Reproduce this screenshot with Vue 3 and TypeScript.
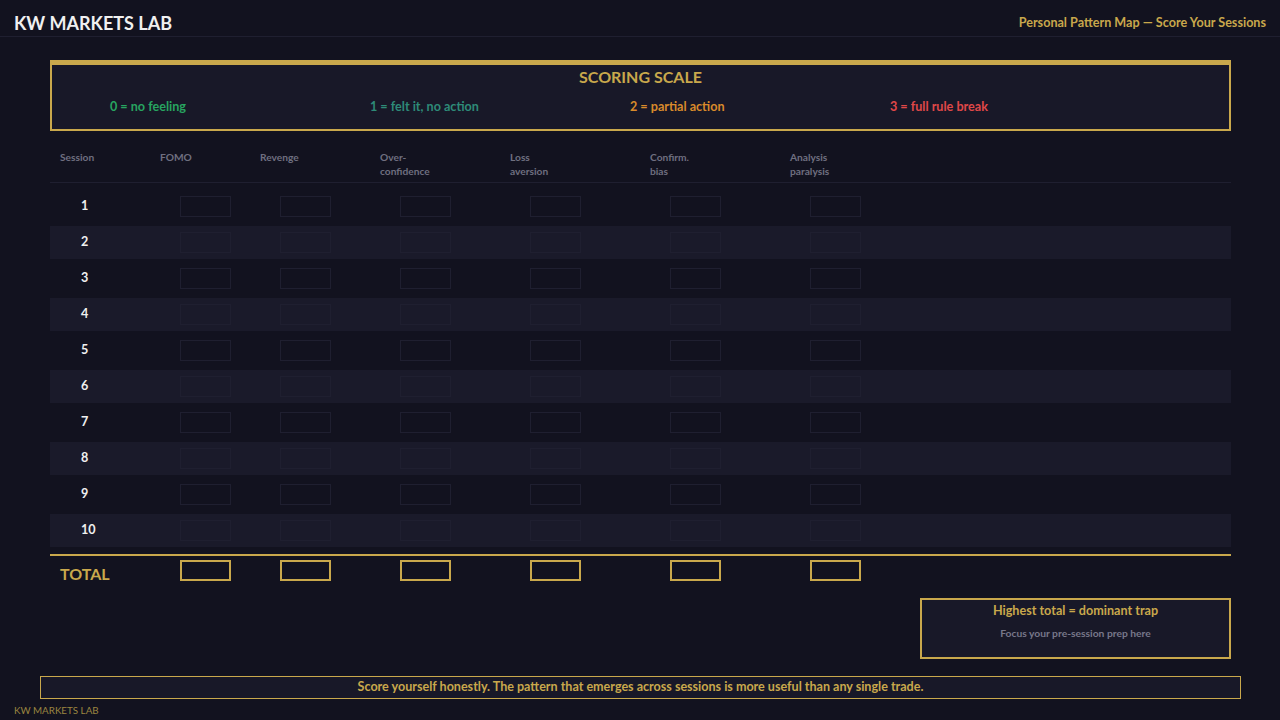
<template>
  <div class="page">
    <header class="top">
      <span class="brand">KW MARKETS LAB</span>
      <span class="subtitle">Personal Pattern Map — Score Your Sessions</span>
    </header>

    <main class="content">
      <section class="scale">
        <h2>SCORING SCALE</h2>
        <div class="legend">
          <span v-for="item in legend" :key="item.label" :class="item.cls">{{ item.label }}</span>
        </div>
      </section>

      <div class="grid head">
        <div v-for="col in columns" :key="col[0]">
          <div v-for="line in col" :key="line">{{ line }}</div>
        </div>
      </div>

      <div v-for="n in 10" :key="n" class="grid row" :class="{ alt: n % 2 === 0 }">
        <div class="num">{{ n }}</div>
        <div v-for="c in 6" :key="c"><div class="cell"></div></div>
      </div>

      <div class="grid total">
        <div class="total-label">TOTAL</div>
        <div v-for="c in 6" :key="c"><div class="cell gold"></div></div>
      </div>

      <aside class="trap">
        <div class="trap-title">Highest total = dominant trap</div>
        <div class="trap-sub">Focus your pre-session prep here</div>
      </aside>
    </main>

    <div class="note">Score yourself honestly. The pattern that emerges across sessions is more useful than any single trade.</div>
    <footer class="foot">KW MARKETS LAB</footer>
  </div>
</template>

<script setup lang="ts">
const legend = [
  { label: '0 = no feeling', cls: 'green' },
  { label: '1 = felt it, no action', cls: 'teal' },
  { label: '2 = partial action', cls: 'orange' },
  { label: '3 = full rule break', cls: 'red' },
];

const columns = [
  ['Session'],
  ['FOMO'],
  ['Revenge'],
  ['Over-', 'confidence'],
  ['Loss', 'aversion'],
  ['Confirm.', 'bias'],
  ['Analysis', 'paralysis'],
];
</script>

<style>
html,
body {
  margin: 0;
  background: #12121f;
}
</style>

<style scoped>
.page {
  width: 1280px;
  height: 720px;
  overflow: hidden;
  background: #12121f;
  font-family: Lato, sans-serif;
  font-weight: 700;
  color: #c9a84c;
}

.top {
  box-sizing: border-box;
  height: 37px;
  border-bottom: 1px solid #1f1f30;
  display: flex;
  justify-content: space-between;
  align-items: center;
  padding: 9px 14px 0;
}

.brand {
  font-size: 18px;
  color: #f0f0f0;
}

.subtitle {
  font-size: 12.6px;
}

.content {
  width: 1181px;
  margin: 23px 0 0 50px;
}

.scale {
  box-sizing: border-box;
  height: 71px;
  background: #181828;
  border: 2px solid #c9a84c;
  border-top-width: 5px;
}

.scale h2 {
  margin: 0;
  padding-top: 2px;
  font-size: 16px;
  line-height: 20px;
  text-align: center;
}

.legend {
  display: grid;
  grid-template-columns: repeat(4, 260px);
  padding: 12px 0 0 58px;
  font-size: 12.6px;
  line-height: 16px;
}

.green { color: #27a560; }
.teal { color: #2e8b78; }
.orange { color: #d98a2b; }
.red { color: #e04848; }

.grid {
  display: grid;
  grid-template-columns: 100px 100px 120px 130px 140px 140px 1fr;
  padding-left: 10px;
}

.head {
  margin-top: 19px;
  height: 32px;
  border-bottom: 1px solid #1f1f30;
  font-size: 10.2px;
  line-height: 14px;
  color: #6f6f80;
}

.row {
  height: 33px;
  margin-bottom: 3px;
  align-items: start;
  color: #f0f0f0;
  font-size: 12.6px;
}

.head + .row {
  margin-top: 7px;
}

.alt {
  background: #1a1a2a;
}

.num {
  padding: 7.5px 0 0 21px;
  line-height: 16px;
}

.cell {
  box-sizing: border-box;
  width: 51px;
  height: 21px;
  margin: 6px 0 0 20px;
  border: 1px solid #1f1f30;
}

.total {
  margin-top: 7px;
  border-top: 2px solid #c9a84c;
  height: 42px;
}

.total .cell {
  margin-top: 4px;
}

.cell.gold {
  border: 2px solid #c9a84c;
}

.total-label {
  font-size: 16px;
  line-height: 20px;
  padding-top: 8px;
}

.trap {
  box-sizing: border-box;
  width: 311px;
  height: 61px;
  margin: 0 0 0 auto;
  background: #181828;
  border: 2px solid #c9a84c;
  text-align: center;
}

.trap-title {
  font-size: 12.6px;
  line-height: 16px;
  padding-top: 3px;
}

.trap-sub {
  margin-top: 7px;
  font-size: 10.3px;
  line-height: 14px;
  color: #77778a;
}

.note {
  box-sizing: border-box;
  width: 1201px;
  height: 23px;
  margin: 17px 0 0 40px;
  background: #181828;
  border: 1px solid #c9a84c;
  font-size: 12.55px;
  line-height: 19px;
  text-align: center;
}

.foot {
  margin: 4px 0 0 14px;
  font-size: 9.8px;
  line-height: 14px;
  font-weight: 400;
  color: #9a8540;
}
</style>
